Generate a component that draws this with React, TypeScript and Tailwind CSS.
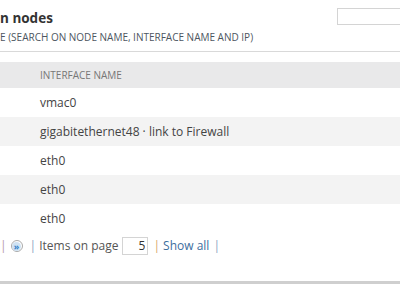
import React from "react";

const rows = [
  "vmac0",
  "gigabitethernet48 · link to Firewall",
  "eth0",
  "eth0",
  "eth0",
];

export default function App() {
  return (
    <div
      className="w-[400px] h-[284px] bg-white overflow-hidden flex flex-col"
      style={{ fontFamily: '"Open Sans", "Liberation Sans", sans-serif' }}
    >
      {/* heading */}
      <div className="flex justify-between h-[52px] border-b border-[#d9d9d9]">
        <div className="pt-[8px]">
          <h1 className="text-[13.5px] leading-[20px] font-bold text-[#333]">n nodes</h1>
          <p className="mt-[3px] text-[10px] leading-[13px] uppercase text-[#4d5661] whitespace-nowrap">
            e (search on node name, interface name and ip)
          </p>
        </div>
        <input
          type="text"
          className="mt-[8px] w-[70px] h-[17px] border border-[#d4d4d4] shrink-0 -mr-[7px]"
        />
      </div>

      {/* table */}
      <div className="mt-[10px]">
        <div className="h-[26px] bg-[#e9e9ea] flex items-center pl-[40px] text-[10px] text-[#777] uppercase">
          Interface name
        </div>
        {rows.map((r, i) => (
          <div
            key={i}
            className={`h-[29px] flex items-center pl-[40px] text-[12px] text-[#444] ${
              i % 2 == 1 ? "bg-[#f3f3f3]" : "bg-white"
            }`}
          >
            {r}
          </div>
        ))}
      </div>

      {/* pager */}
      <div className="mt-[4px] flex items-center h-[18px] text-[12px] text-[#555]">
        <span className="text-[#b79aa9]">|</span>
        <span className="ml-[4px] w-[12px] h-[12px] rounded-full border border-[#aaa] flex items-center justify-center">
          <span className="w-[9px] h-[9px] rounded-full bg-[#cfe2f3] text-[#2f7fc8] text-[9px] leading-[9px] font-bold flex items-center justify-center">
            »
          </span>
        </span>
        <span className="ml-[7px] text-[#8aa6c1]">|</span>
        <span className="ml-[3px]">Items on page</span>
        <input
          readOnly
          value="5"
          className="ml-[4px] w-[26px] h-[18px] border border-[#d4d4d4] text-right pr-[2px] text-[12px] text-[#333]"
        />
        <span className="ml-[5px] text-[#d9a86a]">|</span>
        <span className="ml-[3px] text-[#3d6e9e]">Show all</span>
        <span className="ml-[4px] text-[#8aa6c1]">|</span>
      </div>

      <div className="mt-auto h-[3px] bg-[#cfcfcf]" />
    </div>
  );
}
